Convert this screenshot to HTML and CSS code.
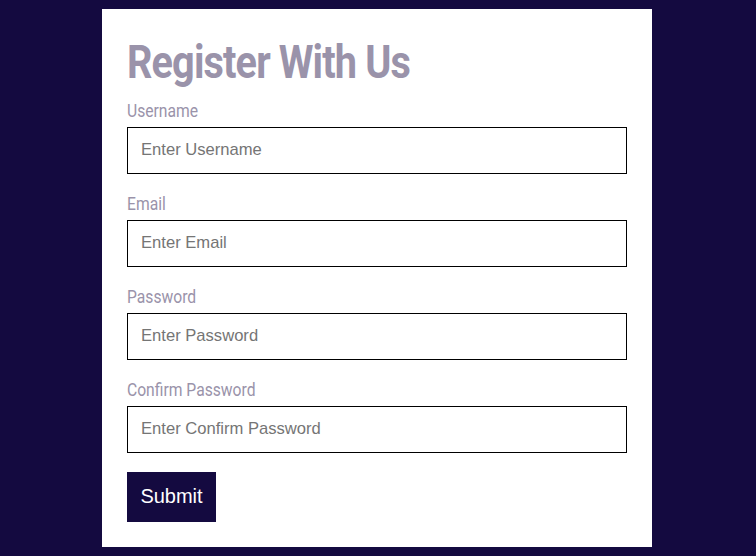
FILE: index.html
```html
<!DOCTYPE html>
<html>
<head>
<meta charset="utf-8">
<link rel="stylesheet" href="styles.css">
</head>
<body>
<div class="card">
  <h1 class="title">Register With Us</h1>
  <form class="form">
    <div class="field">
      <label class="label">Username</label>
      <input class="input" type="text" placeholder="Enter Username">
    </div>
    <div class="field">
      <label class="label">Email</label>
      <input class="input" type="text" placeholder="Enter Email">
    </div>
    <div class="field">
      <label class="label">Password</label>
      <input class="input" type="password" placeholder="Enter Password">
    </div>
    <div class="field">
      <label class="label">Confirm Password</label>
      <input class="input" type="password" placeholder="Enter Confirm Password">
    </div>
    <button class="submit" type="button">Submit</button>
  </form>
</div>
</body>
</html>
```
FILE: styles.css
```css
html, body {
  margin: 0;
  padding: 0;
  background: #140a40;
  height: 100%;
}
body {
  padding-right: 2px;
  box-sizing: border-box;
}
.card {
  width: 550px;
  box-sizing: border-box;
  margin: 9px auto 0;
  background: #fff;
  padding: 28px 25px 25px;
}
.title {
  margin: 0 0 12px;
  font-family: Roboto, sans-serif;
  font-weight: 700;
  font-size: 46px;
  line-height: 50px;
  color: #9a93aa;
  letter-spacing: -1px;
  transform: scaleX(0.862);
  transform-origin: left center;
  white-space: nowrap;
}
.form {
  display: flex;
  flex-direction: column;
}
.field {
  display: flex;
  flex-direction: column;
  margin-bottom: 18px;
}
.label {
  font-family: Roboto, sans-serif;
  font-size: 18px;
  line-height: 24px;
  color: #9a93aa;
  margin-bottom: 4px;
  transform: scaleX(0.87);
  transform-origin: left center;
}
.input {
  box-sizing: border-box;
  width: 500px;
  height: 47px;
  border: 1px solid #000;
  padding: 0 13px 2px;
  margin: 0;
  font-family: "Liberation Sans", Arial, sans-serif;
  font-size: 16.6px;
  color: #333;
  outline: none;
}
.input::placeholder {
  color: #757575;
}
.submit {
  align-self: flex-start;
  width: 89px;
  height: 50px;
  margin-top: 1px;
  background: #140a40;
  color: #fff;
  border: none;
  font-family: "Liberation Sans", Arial, sans-serif;
  font-size: 20px;
  padding: 0 0 2px;
}
```
